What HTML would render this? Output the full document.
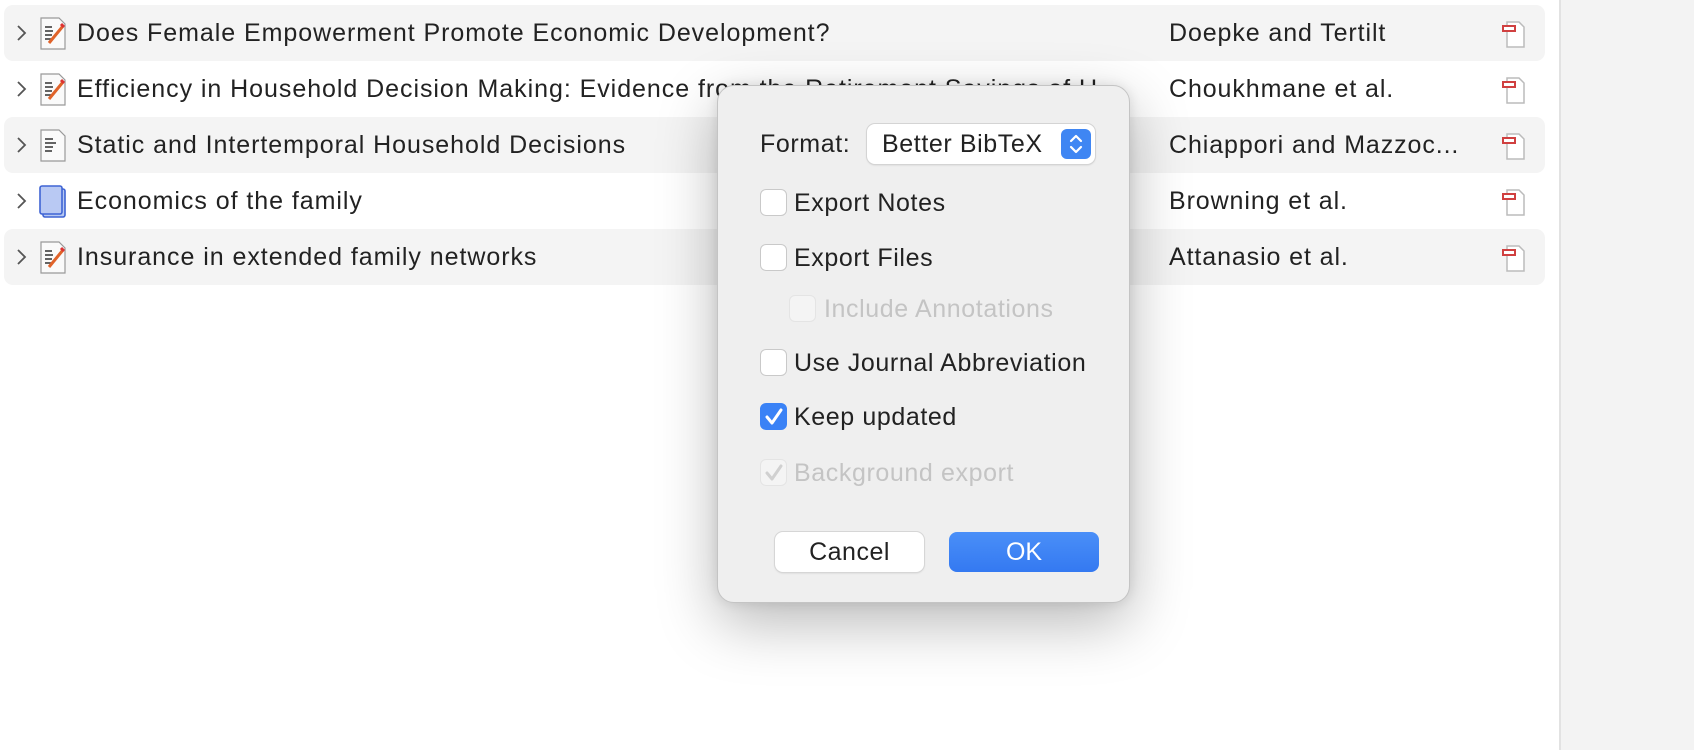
<!DOCTYPE html>
<html><head><meta charset="utf-8"><style>
*{margin:0;padding:0;box-sizing:border-box}
body{width:1694px;height:750px;background:#fff;position:relative;overflow:hidden;font-family:"Liberation Sans",sans-serif;color:#222}
.side{position:absolute;left:1559px;top:0;width:135px;height:750px;background:#f3f3f3;border-left:2px solid #e2e2e2}
.row{position:absolute;left:4px;width:1541px;height:56px;border-radius:9px}
.row.s{background:#f4f4f4}
.row .t{position:absolute;left:73px;top:14px;font-size:25px;letter-spacing:0.95px;white-space:nowrap}
.row .a{position:absolute;left:1165px;top:14px;font-size:25px;letter-spacing:0.9px;white-space:nowrap}
.row .ch{position:absolute;left:12px;top:19px}
.row .ic{position:absolute;left:35px;top:12px}
.row .pdf{position:absolute;left:1494px;top:16px}
.dlg{position:absolute;left:717px;top:85px;width:413px;height:518px;background:#efefef;border-radius:17px;border:1px solid #c4c4c4;box-shadow:0 20px 60px rgba(0,0,0,.28),0 0 12px rgba(0,0,0,.1)}
.lbl{position:absolute;font-size:25px;letter-spacing:0.6px;white-space:nowrap;line-height:28px}
.cb{position:absolute;width:27px;height:27px;border-radius:6px;background:#fff;border:1px solid #c9c9c9}
.dis{color:#c4c4c4}
</style></head><body>
<div class="side"></div>

<svg width="0" height="0" style="position:absolute"><defs>
<g id="chev"><path d="M2 2 L9 9 L2 16" fill="none" stroke="#555" stroke-width="1.8"/></g>
<g id="doc"><path d="M2 1 H20 L26 7 V32 H2 Z" fill="#fafafa" stroke="#999" stroke-width="1.2"/><path d="M6 10h8M6 14h11M6 18h8M6 22h7" stroke="#333" stroke-width="1.6"/></g>
<g id="docp"><path d="M2 1 H20 L26 7 V32 H2 Z" fill="#fafafa" stroke="#999" stroke-width="1.2"/><path d="M6 10h7M6 14h8M6 18h7M6 22h6" stroke="#333" stroke-width="1.6"/><path d="M10 26 L24 9" stroke="#e0632a" stroke-width="3"/><path d="M22 7l3 3" stroke="#d33" stroke-width="3"/></g>
<g id="book"><rect x="4" y="4" width="22" height="28" rx="2" fill="#b7c8f2" stroke="#3f64d4" stroke-width="1.6"/><rect x="1" y="1" width="22" height="28" rx="2" fill="#b9c9f3" stroke="#3f64d4" stroke-width="1.6"/></g>
<g id="pdf"><path d="M9 1 H21 L26 6 V26 H9 Z" fill="#fff" stroke="#bbb" stroke-width="1.5"/><rect x="5" y="5" width="12" height="5" fill="#fff" stroke="#d04040" stroke-width="2"/></g>
</defs></svg>

<div class="row s" style="top:5px"><svg class="ch" width="12" height="20"><use href="#chev"/></svg><svg class="ic" width="28" height="34"><use href="#docp"/></svg><div class="t">Does Female Empowerment Promote Economic Development?</div><div class="a">Doepke and Tertilt</div><svg class="pdf" width="28" height="28"><use href="#pdf"/></svg></div>
<div class="row" style="top:61px"><svg class="ch" width="12" height="20"><use href="#chev"/></svg><svg class="ic" width="28" height="34"><use href="#docp"/></svg><div class="t">Efficiency in Household Decision Making: Evidence from the Retirement Savings of U...</div><div class="a">Choukhmane et al.</div><svg class="pdf" width="28" height="28"><use href="#pdf"/></svg></div>
<div class="row s" style="top:117px"><svg class="ch" width="12" height="20"><use href="#chev"/></svg><svg class="ic" width="28" height="34"><use href="#doc"/></svg><div class="t">Static and Intertemporal Household Decisions</div><div class="a">Chiappori and Mazzoc...</div><svg class="pdf" width="28" height="28"><use href="#pdf"/></svg></div>
<div class="row" style="top:173px"><svg class="ch" width="12" height="20"><use href="#chev"/></svg><svg class="ic" width="28" height="34"><use href="#book"/></svg><div class="t">Economics of the family</div><div class="a">Browning et al.</div><svg class="pdf" width="28" height="28"><use href="#pdf"/></svg></div>
<div class="row s" style="top:229px"><svg class="ch" width="12" height="20"><use href="#chev"/></svg><svg class="ic" width="28" height="34"><use href="#docp"/></svg><div class="t">Insurance in extended family networks</div><div class="a">Attanasio et al.</div><svg class="pdf" width="28" height="28"><use href="#pdf"/></svg></div>

<div class="dlg">
  <div class="lbl" style="left:42px;top:44px">Format:</div>
  <div style="position:absolute;left:149px;top:38px;width:228px;height:40px;background:#fff;border-radius:8px;box-shadow:0 0 0 1px #d4d4d4,0 1px 2px rgba(0,0,0,.15)">
    <div class="lbl" style="left:15px;top:6px">Better BibTeX</div>
    <div style="position:absolute;right:4px;top:5px;width:30px;height:30px;border-radius:6px;background:#3f86f3">
      <svg width="30" height="30"><path d="M10 12l5-5 5 5M10 18l5 5 5-5" fill="none" stroke="#fff" stroke-width="2.2" stroke-linecap="round" stroke-linejoin="round"/></svg>
    </div>
  </div>
  <div class="cb" style="left:42px;top:103px"></div><div class="lbl" style="left:76px;top:103px">Export Notes</div>
  <div class="cb" style="left:42px;top:158px"></div><div class="lbl" style="left:76px;top:158px">Export Files</div>
  <div class="cb" style="left:71px;top:209px;border-color:#e4e4e4;background:#f4f4f4"></div><div class="lbl dis" style="left:106px;top:209px">Include Annotations</div>
  <div class="cb" style="left:42px;top:263px"></div><div class="lbl" style="left:76px;top:263px">Use Journal Abbreviation</div>
  <div class="cb" style="left:42px;top:317px;background:#3a82f6;border-color:#3a82f6"><svg width="27" height="27" style="position:absolute;left:-1px;top:-1px"><path d="M7 14l5 6 9-13" fill="none" stroke="#fff" stroke-width="3" stroke-linecap="round" stroke-linejoin="round"/></svg></div><div class="lbl" style="left:76px;top:317px">Keep updated</div>
  <div class="cb" style="left:42px;top:373px;border-color:#e4e4e4;background:#f4f4f4"><svg width="27" height="27" style="position:absolute;left:-1px;top:-1px"><path d="M7 14l5 6 9-13" fill="none" stroke="#d0d0d0" stroke-width="3" stroke-linecap="round" stroke-linejoin="round"/></svg></div><div class="lbl dis" style="left:76px;top:373px">Background export</div>
  <div style="position:absolute;left:57px;top:446px;width:149px;height:40px;background:#fff;border-radius:8px;box-shadow:0 0 0 1px #d6d6d6,0 1px 2px rgba(0,0,0,.15);text-align:center;line-height:40px;font-size:25px;letter-spacing:0.5px">Cancel</div>
  <div style="position:absolute;left:231px;top:446px;width:150px;height:40px;background:linear-gradient(#4a8ff8,#3479f1);border-radius:8px;text-align:center;line-height:40px;font-size:25px;color:#fff">OK</div>
</div>
</body></html>
